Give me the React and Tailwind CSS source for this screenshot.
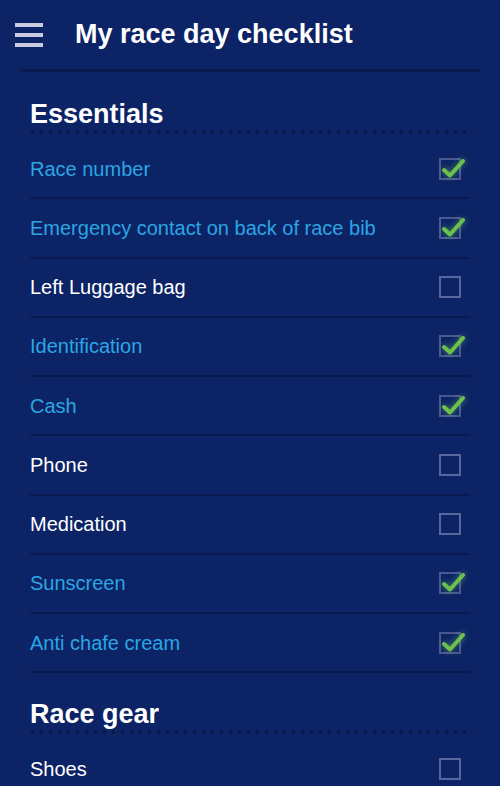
import React from "react";

const essentials = [
  { label: "Race number", checked: true },
  { label: "Emergency contact on back of race bib", checked: true },
  { label: "Left Luggage bag", checked: false },
  { label: "Identification", checked: true },
  { label: "Cash", checked: true },
  { label: "Phone", checked: false },
  { label: "Medication", checked: false },
  { label: "Sunscreen", checked: true },
  { label: "Anti chafe cream", checked: true },
];

const raceGear = [{ label: "Shoes", checked: false }];

function CheckBox({ checked }) {
  return (
    <div
      className={
        "relative w-[22px] h-[22px] mr-[9px] border-2 " +
        (checked ? "border-[#4a5890]" : "border-[#58669c]")
      }
    >
      {checked && (
        <svg
          className="absolute -left-[2px] -top-[2px] overflow-visible drop-shadow-[0_0_3px_rgba(120,220,90,0.55)]"
          width="28"
          height="22"
          viewBox="0 0 28 22"
        >
          <path
            d="M5 12 L11 17.5 L24 3"
            stroke="#6cc04c"
            strokeWidth="4"
            fill="none"
            strokeLinecap="round"
            strokeLinejoin="round"
          />
        </svg>
      )}
    </div>
  );
}

function Row({ label, checked }) {
  return (
    <div className="h-[59.25px] flex items-center justify-between border-b-2 border-[#0a1a4e]">
      <span
        className={
          "text-[20px] leading-[24px] " +
          (checked ? "text-[#2ba6e2]" : "text-white")
        }
      >
        {label}
      </span>
      <CheckBox checked={checked} />
    </div>
  );
}

function Dotted() {
  return (
    <div className="-mx-[2px] mt-[1px] h-[4px] bg-[radial-gradient(circle,#07184a_1.6px,transparent_2.2px)] bg-[length:9px_4px] bg-repeat-x" />
  );
}

function Section({ title, items, first }) {
  return (
    <div className={first ? "mt-[28px]" : "mt-[27px]"}>
      <h2 className="text-[27px] leading-[29px] font-bold text-white">{title}</h2>
      <Dotted />
      <div className="mt-[6px]">
        {items.map((it) => (
          <Row key={it.label} {...it} />
        ))}
      </div>
    </div>
  );
}

export default function App() {
  return (
    <div className="min-h-screen bg-[#0c2366] font-['Liberation_Sans',Arial,sans-serif]">
      <header className="h-[69px] flex items-center">
        <div className="ml-[15px] flex flex-col gap-[6px]">
          <span className="block w-[28px] h-[4px] bg-[#c9cde2]" />
          <span className="block w-[28px] h-[4px] bg-[#c9cde2]" />
          <span className="block w-[28px] h-[4px] bg-[#c9cde2]" />
        </div>
        <h1 className="ml-[32px] text-[27px] leading-[31px] font-bold text-white">
          My race day checklist
        </h1>
      </header>
      <div className="mx-5 h-[3px] rounded-full bg-[#091a4f]" />
      <main className="px-[30px]">
        <Section title="Essentials" items={essentials} first />
        <Section title="Race gear" items={raceGear} />
      </main>
    </div>
  );
}
